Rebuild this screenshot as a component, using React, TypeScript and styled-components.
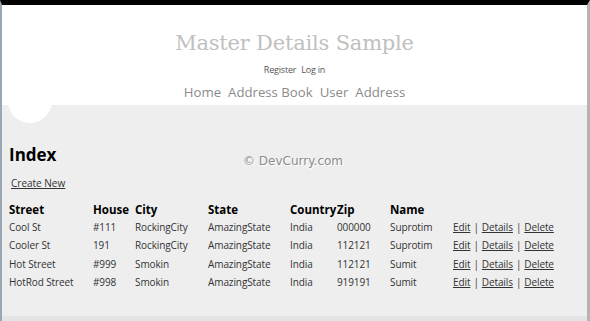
import styled, { createGlobalStyle } from "styled-components";

const GlobalStyle = createGlobalStyle`
  html, body {
    margin: 0;
    padding: 0;
    background: #ffffff;
  }
`;

const Window = styled.div`
  display: flex;
  flex-direction: column;
  width: 590px;
  height: 321px;
  box-sizing: border-box;
  border-top: 5px solid #000000;
  border-left: 2px solid #9aa6b2;
  border-right: 3px solid #b4b4b4;
  overflow: hidden;
  font-family: "Open Sans", "Noto Sans", sans-serif;
`;

const Header = styled.header`
  display: flex;
  flex-direction: column;
  align-items: center;
  height: 100px;
  background: #ffffff;
`;

const SiteTitle = styled.h1`
  margin: 23px 0 0;
  font-family: "DejaVu Serif", "Liberation Serif", serif;
  font-weight: normal;
  font-size: 21px;
  line-height: 30px;
  color: #c0c0c0;
  letter-spacing: -0.2px;
`;

const LoginLinks = styled.div`
  display: flex;
  gap: 5px;
  margin-top: 5px;
  font-size: 9px;
  line-height: 14px;
  color: #555555;
  letter-spacing: -0.2px;
`;

const Menu = styled.nav`
  display: flex;
  gap: 7px;
  margin-top: 6px;
  font-size: 13.2px;
  line-height: 18px;
  color: #8a8a8a;
`;

const Main = styled.main`
  position: relative;
  flex-grow: 1;
  background: #eeeeee;
  padding: 38px 7px 0;
`;

const Bubble = styled.div`
  position: absolute;
  left: 6px;
  top: -26px;
  width: 44px;
  height: 44px;
  border-radius: 50%;
  background: #ffffff;
`;

const Watermark = styled.div`
  position: absolute;
  left: 241px;
  top: 49px;
  font-family: "DejaVu Sans", sans-serif;
  font-size: 12px;
  color: #8c8c8c;
  text-shadow: 1px 1px 0 #ffffff;
`;

const PageTitle = styled.h2`
  margin: 0;
  font-size: 17px;
  line-height: 24px;
  font-weight: bold;
  color: #000000;
`;

const CreateLink = styled.a`
  display: inline-block;
  margin: 9px 0 0 2px;
  font-size: 10px;
  line-height: 14px;
  color: #333333;
  text-decoration: underline;
`;

const Grid = styled.table`
  margin-top: 9px;
  border-collapse: collapse;
  table-layout: fixed;
  font-size: 10px;
  letter-spacing: -0.1px;
  color: #333333;
`;

const HeadCell = styled.th<{ $w: number }>`
  width: ${({ $w }) => $w}px;
  padding: 0;
  text-align: left;
  font-size: 11.5px;
  line-height: 17px;
  font-weight: bold;
  letter-spacing: 0;
  color: #000000;
  white-space: nowrap;
`;

const Cell = styled.td`
  padding: 0;
  height: 18.3px;
  line-height: 18px;
  white-space: nowrap;
`;

const Action = styled.a`
  color: #333333;
  text-decoration: underline;
`;

const Sep = styled.span`
  margin: 0 3px;
`;

const Footer = styled.footer`
  height: 5px;
  background: #e4e4e4;
`;

const columns = [
  { label: "Street", w: 84 },
  { label: "House", w: 42 },
  { label: "City", w: 73 },
  { label: "State", w: 82 },
  { label: "Country", w: 47 },
  { label: "Zip", w: 53 },
  { label: "Name", w: 63 },
  { label: "", w: 120 },
];

const rows = [
  ["Cool St", "#111", "RockingCity", "AmazingState", "India", "000000", "Suprotim"],
  ["Cooler St", "191", "RockingCity", "AmazingState", "India", "112121", "Suprotim"],
  ["Hot Street", "#999", "Smokin", "AmazingState", "India", "112121", "Sumit"],
  ["HotRod Street", "#998", "Smokin", "AmazingState", "India", "919191", "Sumit"],
];

export default function App() {
  return (
    <>
      <GlobalStyle />
      <Window>
        <Header>
          <SiteTitle>Master Details Sample</SiteTitle>
          <LoginLinks>
            <span>Register</span>
            <span>Log in</span>
          </LoginLinks>
          <Menu>
            <span>Home</span>
            <span>Address Book</span>
            <span>User</span>
            <span>Address</span>
          </Menu>
        </Header>
        <Main>
          <Bubble />
          <Watermark>© DevCurry.com</Watermark>
          <PageTitle>Index</PageTitle>
          <CreateLink>Create New</CreateLink>
          <Grid>
            <thead>
              <tr>
                {columns.map((c, i) => (
                  <HeadCell key={i} $w={c.w}>{c.label}</HeadCell>
                ))}
              </tr>
            </thead>
            <tbody>
              {rows.map((r, i) => (
                <tr key={i}>
                  {r.map((v, j) => (
                    <Cell key={j}>{v}</Cell>
                  ))}
                  <Cell>
                    <Action>Edit</Action>
                    <Sep>|</Sep>
                    <Action>Details</Action>
                    <Sep>|</Sep>
                    <Action>Delete</Action>
                  </Cell>
                </tr>
              ))}
            </tbody>
          </Grid>
        </Main>
        <Footer />
      </Window>
    </>
  );
}
